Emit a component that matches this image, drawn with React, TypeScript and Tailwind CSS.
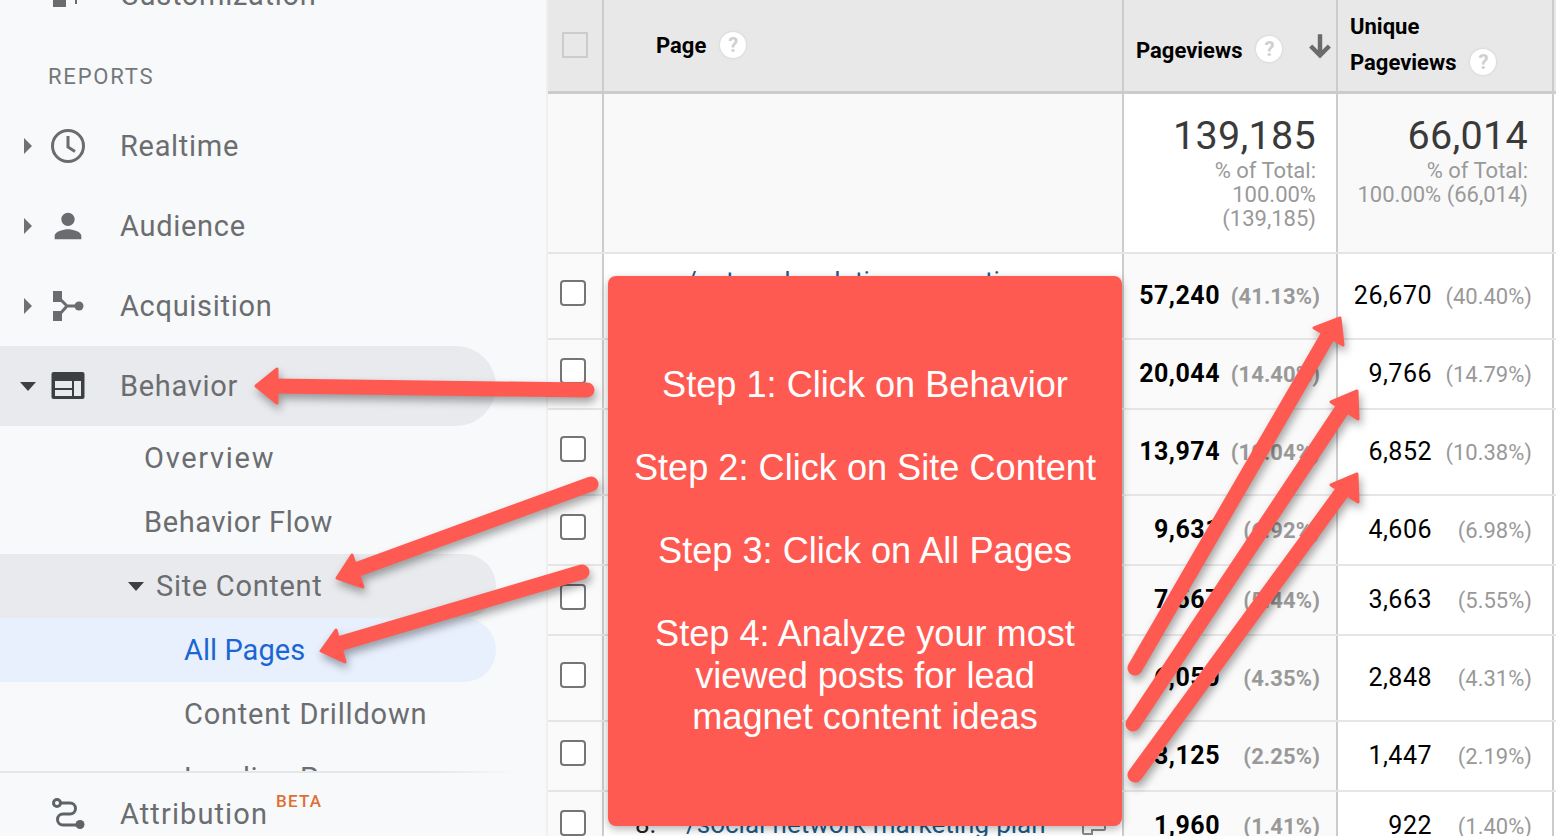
import React from "react";

const rows = [
  { h: "h-[86px]", no: "1.", pv: "57,240", pvPct: "(41.13%)", up: "26,670", upPct: "(40.40%)" },
  { h: "h-[70px]", no: "2.", pv: "20,044", pvPct: "(14.40%)", up: "9,766", upPct: "(14.79%)" },
  { h: "h-[86px]", no: "3.", pv: "13,974", pvPct: "(10.04%)", up: "6,852", upPct: "(10.38%)" },
  { h: "h-[70px]", no: "4.", pv: "9,631", pvPct: "(6.92%)", up: "4,606", upPct: "(6.98%)" },
  { h: "h-[70px]", no: "5.", pv: "7,567", pvPct: "(5.44%)", up: "3,663", upPct: "(5.55%)" },
  { h: "h-[86px]", no: "6.", pv: "6,050", pvPct: "(4.35%)", up: "2,848", upPct: "(4.31%)" },
  { h: "h-[70px]", no: "7.", pv: "3,125", pvPct: "(2.25%)", up: "1,447", upPct: "(2.19%)" },
  { h: "h-[70px]", no: "8.", pv: "1,960", pvPct: "(1.41%)", up: "922", upPct: "(1.40%)" },
];

const gridCols = "grid grid-cols-[56px_520px_214px_216px_1fr]";
const navText = "text-[29px] tracking-[0.7px] text-[#6b6d70]";

function CaretRight() {
  return (
    <svg viewBox="0 0 20 20" className="w-5 h-5 fill-[#6f7174]">
      <path d="M6 2 L14 10 L6 18 Z" />
    </svg>
  );
}

function CaretDown() {
  return (
    <svg viewBox="0 0 20 20" className="w-5 h-5 fill-[#3c4043]">
      <path d="M2 6 H18 L10 15 Z" />
    </svg>
  );
}

function ClockIcon() {
  return (
    <svg viewBox="0 0 40 40" className="w-10 h-10 fill-none stroke-[#6a6c6f]" strokeWidth="3">
      <circle cx="20" cy="20" r="15.5" />
      <path d="M20 10 V21 L27 25.5" />
    </svg>
  );
}

function PersonIcon() {
  return (
    <svg viewBox="0 0 24 24" className="w-[42px] h-[42px] fill-[#6a6c6f]">
      <path d="M12 12c2.21 0 4-1.79 4-4s-1.79-4-4-4-4 1.79-4 4 1.79 4 4 4zm0 2c-2.67 0-8 1.34-8 4v2h16v-2c0-2.66-5.33-4-8-4z" />
    </svg>
  );
}

function AcquisitionIcon() {
  return (
    <svg viewBox="0 0 40 40" className="w-10 h-10 fill-[#6a6c6f]">
      <rect x="5" y="5" width="9" height="11" />
      <rect x="5" y="25" width="9" height="10" />
      <circle cx="31" cy="20" r="4.5" />
      <path d="M11 12 L19 20 L11 29 M19 20 H28" className="fill-none stroke-[#6a6c6f]" strokeWidth="3" />
    </svg>
  );
}

function BehaviorIcon() {
  return (
    <svg viewBox="0 0 40 40" className="w-10 h-10">
      <rect x="3.5" y="6" width="33" height="27" rx="2" className="fill-[#3c4043]" />
      <rect x="7" y="15" width="17" height="7" className="fill-[#e8eaed]" />
      <rect x="7" y="24" width="17" height="6" className="fill-[#e8eaed]" />
      <rect x="26" y="15" width="7" height="15" className="fill-[#e8eaed]" />
    </svg>
  );
}

function AttributionIcon() {
  return (
    <svg viewBox="0 0 40 40" className="w-10 h-10 fill-none stroke-[#5f6368]" strokeWidth="3">
      <circle cx="9" cy="8" r="3.5" />
      <path d="M12.5 8 H22 a5.5 5.5 0 0 1 0 11 H15 a5.5 5.5 0 0 0 0 11 H30" />
      <circle cx="32" cy="29.5" r="4.5" className="fill-[#5f6368] stroke-none" />
    </svg>
  );
}

function CustomIcon() {
  return (
    <svg viewBox="0 0 40 40" className="w-10 h-10 fill-[#6a6c6f]">
      <rect x="5" y="4" width="13" height="27" />
      <path d="M23 22 H33 M28 16 V28" className="fill-none stroke-[#6a6c6f]" strokeWidth="2" />
    </svg>
  );
}

function NavRow({ icon, label, open, active }: { icon: React.ReactNode; label: string; open?: boolean; active?: boolean }) {
  return (
    <div className={`h-20 w-[496px] flex items-center pl-[18px] shrink-0 rounded-r-[40px] ${active ? "bg-[#e8eaed]" : ""}`}>
      <span className="w-5 flex justify-center">{open ? <CaretDown /> : <CaretRight />}</span>
      <span className="w-10 ml-[10px] flex justify-center">{icon}</span>
      <span className={`ml-[32px] pt-[2px] ${navText}`}>{label}</span>
    </div>
  );
}

function SubRow({ label, className }: { label: string; className: string }) {
  return (
    <div className={`h-16 w-[496px] flex items-center shrink-0 pt-[2px] ${navText} ${className}`}>
      {label}
    </div>
  );
}

function Sidebar() {
  return (
    <aside className="w-[546px] h-[836px] shrink-0 flex flex-col bg-[#f8f9fb] font-['Roboto',sans-serif]">
      <div className="flex-1 min-h-0 overflow-hidden">
        <div className="h-10 -mt-6 flex items-center pl-[48px]">
          <CustomIcon />
          <span className={`ml-[32px] ${navText}`}>Customization</span>
        </div>
        <div className="h-10 mt-[40px] mb-[10px] pl-[48px] flex items-center text-[22px] tracking-[1.8px] text-[#74777a]">REPORTS</div>
        <NavRow icon={<ClockIcon />} label="Realtime" />
        <NavRow icon={<PersonIcon />} label="Audience" />
        <NavRow icon={<AcquisitionIcon />} label="Acquisition" />
        <NavRow icon={<BehaviorIcon />} label="Behavior" open active />
        <SubRow label="Overview" className="pl-[144px] !tracking-[1.7px]" />
        <SubRow label="Behavior Flow" className="pl-[144px] !tracking-[0.6px]" />
        <div className={`h-16 w-[496px] flex items-center pl-[126px] rounded-r-[32px] bg-[#e8eaed] ${navText}`}>
          <span className="w-5 flex justify-center">
            <CaretDown />
          </span>
          <span className="ml-[10px] pt-[2px]">Site Content</span>
        </div>
        <SubRow label="All Pages" className="pl-[184px] rounded-r-[32px] bg-[#e8f0fe] !text-[#1a67d2] !tracking-[0.05px]" />
        <SubRow label="Content Drilldown" className="pl-[184px] !tracking-[0.8px]" />
        <SubRow label="Landing Pages" className="pl-[184px]" />
      </div>
      <div className="h-[65px] shrink-0 relative">
        <div className="h-[2px] w-[515px] bg-linear-to-r from-[#e6e7e8] from-85% to-transparent" />
        <div className="flex items-center pl-[48px] h-[63px] pt-[20px]">
          <AttributionIcon />
          <span className={`ml-[32px] ${navText} !tracking-[1.1px]`}>Attribution</span>
          <span className="ml-2 -mt-[25px] text-[17px] font-medium tracking-[1.2px] text-[#e0702f]">BETA</span>
        </div>
      </div>
    </aside>
  );
}

function Help({ className = "" }: { className?: string }) {
  return (
    <span className={`inline-flex items-center justify-center w-[26px] h-[26px] rounded-full bg-white shadow-[0_0_3px_rgba(0,0,0,0.12)] text-[20px] font-bold text-[#cfcfcf] ${className}`}>
      ?
    </span>
  );
}

function HeaderRow() {
  return (
    <div className={`${gridCols} h-[94px] bg-[#e8e8e8] border-b-[3px] border-[#cccccc] text-[22px] font-bold text-black`}>
      <div className="border-r-2 border-[#cccccc] flex items-center justify-center pb-[1px]">
        <span className="w-[26px] h-[26px] border-2 border-[#cccccc]" />
      </div>
      <div className="border-r-2 border-[#cccccc] flex items-center pl-[52px]">
        Page
        <Help className="ml-[14px] -mt-[1px]" />
      </div>
      <div className="border-r-2 border-[#cccccc] flex items-center pl-[12px] pt-[9px]">
        Pageviews
        <Help className="ml-[14px] -mt-[2px]" />
        <svg viewBox="0 0 24 24" className="w-7 h-7 ml-[24px] -mt-[8px] fill-none stroke-[#6b6b6b]" strokeWidth="3.8">
          <path d="M12 2 V20 M4 12 L12 20 L20 12" />
        </svg>
      </div>
      <div className="border-r-2 border-[#cccccc] pl-[12px] flex flex-col pt-[9px] leading-[36px]">
        <span>Unique</span>
        <span className="flex items-center">
          Pageviews
          <Help className="ml-[14px] -mt-[2px]" />
        </span>
      </div>
      <div />
    </div>
  );
}

function SummaryCell({ total, lines, className }: { total: string; lines: string[]; className: string }) {
  return (
    <div className={`border-r-2 border-[#cccccc] text-right pt-[19px] ${className}`}>
      <div className="text-[39.5px] leading-[46px] tracking-[0.3px] font-normal text-[#3a3a3a]">{total}</div>
      <div className="text-[22px] leading-[24px] text-[#999999]">
        {lines.map((line) => (
          <div key={line}>{line}</div>
        ))}
      </div>
    </div>
  );
}

function SummaryRow() {
  return (
    <div className={`${gridCols} h-[160px] border-b-2 border-[#e5e5e5]`}>
      <div className="border-r-2 border-[#cccccc] bg-[#f9f9f9]" />
      <div className="border-r-2 border-[#cccccc] bg-[#f9f9f9]" />
      <SummaryCell total="139,185" lines={["% of Total:", "100.00%", "(139,185)"]} className="bg-white pr-[20px]" />
      <SummaryCell total="66,014" lines={["% of Total:", "100.00% (66,014)"]} className="bg-[#f9f9f9] pr-[24px]" />
      <div />
    </div>
  );
}

function DataRow({ row, index }: { row: (typeof rows)[number]; index: number }) {
  return (
    <div className={`${gridCols} ${row.h} shrink-0 border-b-2 border-[#e5e5e5] text-black`}>
      <div className="border-r-2 border-[#cccccc] bg-[#fafafa] flex items-center justify-center pr-[4px] pb-[7px]">
        <span className="w-[26px] h-[26px] rounded-[4px] border-2 border-[#757575] bg-white" />
      </div>
      <div className="border-r-2 border-[#cccccc] bg-white flex items-center pl-[31px] pb-[3px] text-[26px] text-[#1a5c8c] relative whitespace-nowrap">
        <span className="w-[51px] text-[#222222]">{row.no}</span>
        {index === 0 && <span className="pb-[27px]">/outreach-solution-generation</span>}
        {index === 7 && (
          <>
            <span>/social-network-marketing-plan</span>
            <svg viewBox="0 0 26 14" className="absolute right-[15px] top-[30px] w-[26px] h-[14px] fill-none stroke-[#8a8a8a]" strokeWidth="2">
              <path d="M2 2 V11 a1 1 0 0 0 1 1 H11 V8 H23 a1 1 0 0 0 1-1 V2" />
            </svg>
          </>
        )}
      </div>
      <div className="border-r-2 border-[#cccccc] bg-[#fafafa] flex items-center justify-end pr-[16px]">
        <span className="text-[25px] font-bold tracking-[0.5px]">{row.pv}</span>
        <span className="w-[100px] mt-[1px] text-right text-[22px] font-bold tracking-[0.1px] text-[#999999]">{row.pvPct}</span>
      </div>
      <div className="border-r-2 border-[#cccccc] bg-white flex items-center justify-end pr-[20px]">
        <span className="text-[25px] tracking-[0.5px]">{row.up}</span>
        <span className="w-[100px] mt-[1px] text-right text-[22px] text-[#999999]">{row.upPct}</span>
      </div>
      <div />
    </div>
  );
}

function Arrow({ d, head }: { d: string; head: string }) {
  return (
    <g>
      <path d={d} fill="none" stroke="#ff5a52" strokeWidth="15" strokeLinecap="round" />
      <polygon points={head} fill="#ff5a52" stroke="#ff5a52" strokeWidth="3" strokeLinejoin="round" />
    </g>
  );
}

function Arrows() {
  return (
    <svg viewBox="0 0 1556 836" className="absolute inset-0 w-full h-full pointer-events-none drop-shadow-[2px_5px_4px_rgba(0,0,0,0.35)]">
      <Arrow d="M274 386 L587 390" head="256,386 277,369 277,403" />
      <Arrow d="M350 572 L591 484" head="337,578 352,555 363,587" />
      <Arrow d="M335 645 L582 572" head="321,651 336,630 345,662" />
      <Arrow d="M1135 668 L1330 332" head="1340,318 1314,328 1343,345" />
      <Arrow d="M1133 724 L1345 405" head="1357,391 1331,402 1358,419" />
      <Arrow d="M1135 775 L1345 488" head="1357,474 1331,485 1358,502" />
    </svg>
  );
}

function Callout() {
  return (
    <div className="absolute left-[608px] top-[276px] w-[514px] h-[550px] pt-[88px] rounded-lg bg-[#ff5a52] shadow-[0_3px_8px_rgba(0,0,0,0.3)] text-center text-white text-[36.15px] leading-[41.5px] font-['Liberation_Sans',Arial,sans-serif] flex flex-col gap-[41.5px]">
      <p>Step 1: Click on Behavior</p>
      <p>Step 2: Click on Site Content</p>
      <p>Step 3: Click on All Pages</p>
      <p>
        Step 4: Analyze your most
        <br />
        viewed posts for lead
        <br />
        magnet content ideas
      </p>
    </div>
  );
}

export default function App() {
  return (
    <div className="relative w-[1556px] h-[836px] overflow-hidden flex bg-white">
      <Sidebar />
      <main className="flex-1 min-w-0 border-l-2 border-[#f0f0f0] font-['Roboto',sans-serif]">
        <HeaderRow />
        <SummaryRow />
        {rows.map((row, i) => (
          <DataRow key={row.no} row={row} index={i} />
        ))}
      </main>
      <Callout />
      <Arrows />
    </div>
  );
}
